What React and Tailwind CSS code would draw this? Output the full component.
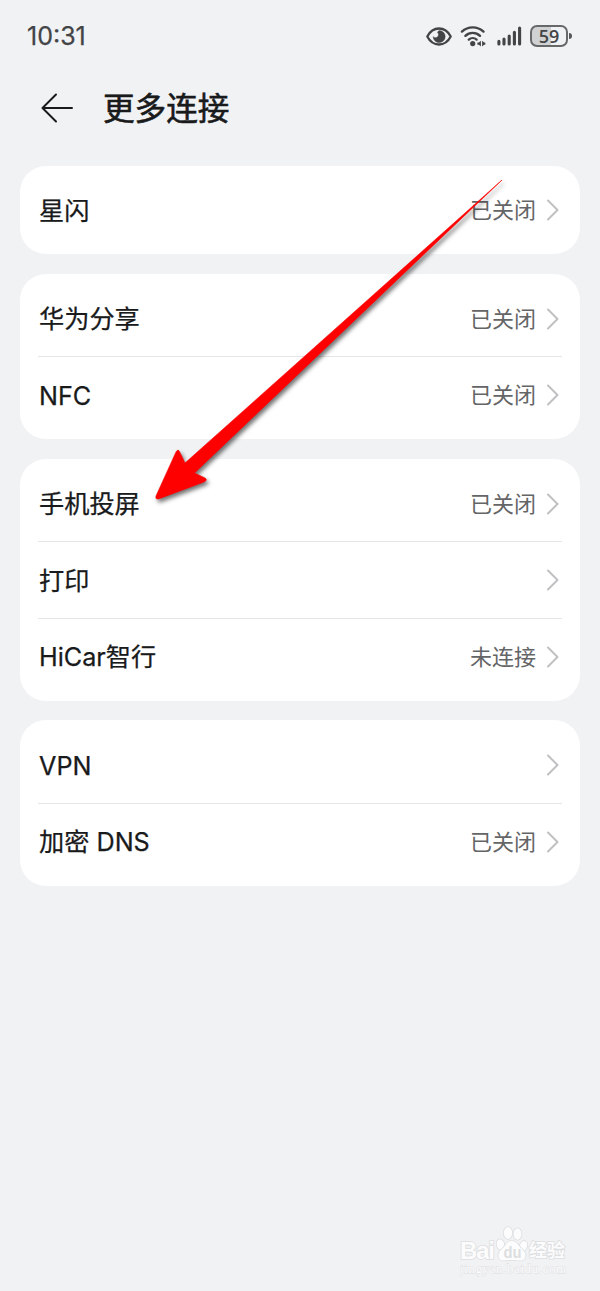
import React from 'react';

const groups = [
  [{ label: '星闪', value: '已关闭' }],
  [
    { label: '华为分享', value: '已关闭' },
    { label: 'NFC', value: '已关闭' },
  ],
  [
    { label: '手机投屏', value: '已关闭' },
    { label: '打印' },
    { label: 'HiCar智行', value: '未连接' },
  ],
  [
    { label: 'VPN' },
    { label: '加密 DNS', value: '已关闭' },
  ],
];

const EyeIcon = () => (
  <svg className="w-[26px] h-[19px]" viewBox="0 0 26 19" fill="none">
    <path d="M1.3 9.5C4 4.3 8.2 1.5 13 1.5s9 2.8 11.7 8C22 14.7 17.8 17.5 13 17.5S4 14.7 1.3 9.5Z" stroke="#434446" strokeWidth="2.3" strokeLinejoin="round" />
    <path d="M13.2 3.6A6 6 0 1 1 7.2 9.7c1.3 1.3 3.4 1.2 4.5 0 1.2-1.3 1.1-3.2-.2-4.3.4-.8 1-1.5 1.7-1.8Z" fill="#434446" stroke="#434446" strokeWidth="0.5" />
  </svg>
);

const WifiIcon = () => (
  <svg className="w-[26px] h-[21px]" viewBox="0 0 26 21" fill="none">
    <g stroke="#434446" strokeWidth="2.4" strokeLinecap="round">
      <path d="M1.9 5.6a15.8 15.8 0 0 1 21.6 0" />
      <path d="M5.4 9.8a10.6 10.6 0 0 1 14.6 0" />
      <path d="M8.8 13.6a5.8 5.8 0 0 1 7.8 0" />
    </g>
    <circle cx="12.7" cy="17.6" r="2.6" fill="#434446" />
    <path d="M20.9 14.8v5.6l-2-1.7h-1.5v-2.2h1.5ZM22.1 14.8v5.6l2-1.7h1.2v-2.2h-1.2Z" fill="#434446" />
  </svg>
);

const SignalIcon = () => (
  <svg className="w-[25px] h-[20px]" viewBox="0 0 25 20" stroke="#434446" strokeWidth="3.1" strokeLinecap="round">
    <path d="M1.9 15.4v2.5M7 13v4.9M12.2 10v7.900M17.4 6.3v11.6M22.6 2v15.9" />
  </svg>
);

const Battery = () => (
  <div className="flex items-center gap-px">
    <div className="flex h-[22px] w-[38px] items-center justify-center rounded-[7px] border-2 border-[#66686a] bg-[linear-gradient(90deg,#d0d1d3_57%,transparent_57%)]">
      <span className="font-['Open_Sans',sans-serif] text-[18px] font-semibold leading-[24px] text-[#434446]">59</span>
    </div>
    <div className="w-[3px] h-[6px] rounded-r-sm bg-[#55575a]" />
  </div>
);

const StatusBar = () => (
  <header className="flex h-[72px] items-center pl-[27px] pr-[28px]">
    <span className="pt-[2px] text-[25px] text-[#434446] [-webkit-text-stroke:0.25px_#434446]">10:31</span>
    <div className="ml-auto flex items-center">
      <EyeIcon />
      <span className="ml-[8px]"><WifiIcon /></span>
      <span className="ml-[11px]"><SignalIcon /></span>
      <span className="ml-[8px]"><Battery /></span>
    </div>
  </header>
);

const TitleBar = () => (
  <div className="flex h-[93.5px] items-center pb-[22px] pl-[41px]">
    <svg className="w-[33px] h-[30px]" viewBox="0 0 33 30" fill="none" stroke="#191a1b" strokeWidth="2" strokeLinecap="round" strokeLinejoin="round">
      <path d="M15 1.5 1.5 15 15 28.5M1.5 15h29.5" />
    </svg>
    <h1 className="ml-[29px] pt-[3px] text-[31.6px] leading-[40px] text-[#191a1b] [-webkit-text-stroke:0.6px_#191a1b]">更多连接</h1>
  </div>
);

const Chevron = () => (
  <svg className="ml-[10px] w-[14px] h-[22px]" viewBox="0 0 14 22" fill="none" stroke="#bfc0c1" strokeWidth="2" strokeLinecap="round" strokeLinejoin="round">
    <path d="M2 1.5 11.5 11 2 20.5" />
  </svg>
);

const Row = ({ label, value }) => (
  <div className="flex h-[76.6px] items-center border-t border-[#e5e6e7] pl-px pr-[2px] first:border-transparent">
    <span className="pt-px text-[25.2px] leading-[36px] text-[#191a1b] [-webkit-text-stroke:0.25px_#191a1b]">{label}</span>
    <div className="ml-auto flex items-center">
      {value && <span className="text-[22px] leading-[32px] text-[#646566]">{value}</span>}
      <Chevron />
    </div>
  </div>
);

const PointerArrow = () => (
  <svg className="pointer-events-none absolute left-0 top-0 w-[600px] h-[600px] drop-shadow-[2px_3px_2px_rgba(0,0,0,0.55)]" viewBox="0 0 600 600">
    <path
      d="M502 180 185 463 179.5 451.5Q178 448.5 176 452L156 496Q155 499.5 158.5 499L204 482Q208 480 205 478L194.5 473Z"
      fill="#fe0000"
      stroke="#fe0000"
      strokeWidth="0.6"
    />
  </svg>
);

const Watermark = () => (
  <div className="absolute left-[460px] top-[1225px] w-[110px] h-[54px]">
    <svg className="w-[110px] h-[54px]" viewBox="0 0 110 54" fill="#fcfcfd" stroke="#dcdee0" strokeWidth="1.6">
      <text x="0" y="34" fontSize="24" fontWeight="700" fontFamily="Liberation Sans" paintOrder="stroke" textLength="35">Bai</text>
      <ellipse cx="40.5" cy="19.5" rx="3.8" ry="5.3" transform="rotate(-15 40.5 19.5)" paintOrder="stroke" />
      <ellipse cx="48" cy="8" rx="4.2" ry="6" paintOrder="stroke" />
      <ellipse cx="57.5" cy="9" rx="4" ry="5.8" paintOrder="stroke" />
      <ellipse cx="63.5" cy="21" rx="3.6" ry="5.2" transform="rotate(15 63.5 21)" paintOrder="stroke" />
      <path d="M52 16c5 0 6 4 9 7s6 6 4 10-7 2-13 2-11 2-13-2 1-7 4-10 4-7 9-7Z" paintOrder="stroke" />
      <text x="43.5" y="33" fontSize="17" fontWeight="700" fontFamily="Liberation Sans" fill="#dcdee0" stroke="none" textLength="18" lengthAdjust="spacingAndGlyphs">du</text>
      <text x="69" y="32" fontSize="18" fontWeight="700" fontFamily="Noto Sans CJK SC" paintOrder="stroke" textLength="36">经验</text>
      <text x="0" y="48" fontSize="12.5" fontFamily="Liberation Serif" strokeWidth="0.8" paintOrder="stroke" textLength="106">jingyan.baidu.com</text>
    </svg>
  </div>
);

const App = () => {
  return (
    <div className="relative h-[1291px] w-[600px] overflow-hidden bg-[#f1f2f4] font-[Inter,'Noto_Sans_CJK_SC',sans-serif]">
      <StatusBar />
      <TitleBar />
      <main className="flex flex-col gap-[19.8px] px-5">
        {groups.map((rows) => (
          <section key={rows[0].label} className="rounded-[26px] bg-white px-[18px] py-[6px]">
            {rows.map((row) => (
              <Row key={row.label} {...row} />
            ))}
          </section>
        ))}
      </main>
      <PointerArrow />
      <Watermark />
    </div>
  );
};

export default App;
